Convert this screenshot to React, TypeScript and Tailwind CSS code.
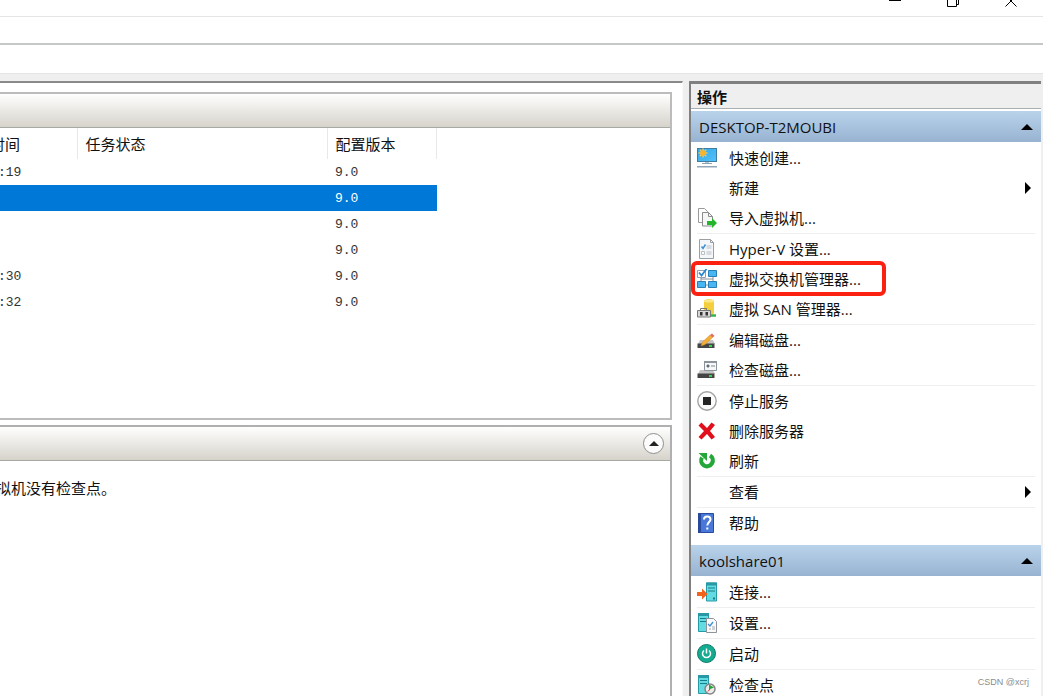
import type { ReactNode } from "react";

const ui = "font-['Open_Sans','Noto_Sans_CJK_SC',sans-serif]";

const QuickCreateIcon = () => (
  <svg viewBox="0 0 20 20" className="size-5">
    <defs>
      <linearGradient id="screen" x1="0" y1="0" x2="1" y2="1">
        <stop offset="0" stopColor="#2fa8e8" />
        <stop offset="1" stopColor="#55c1fa" />
      </linearGradient>
    </defs>
    <rect x="0.5" y="0.5" width="19" height="13" fill="url(#screen)" stroke="#3f7da0" />
    <path d="M8 14h4v1.5H8z" fill="#b5c3cd" />
    <path d="M5 15h10v1H5z" fill="#8fa3b2" />
    <path d="M0 18h20v1.5H0z" fill="#91a7b8" />
    <path d="M6 .5v9M1.5 5h9M2.800 1.800l6.400 6.400M9.200 1.800L2.800 8.200" stroke="#f0c860" strokeWidth="1.400" />
    <circle cx="6" cy="5" r="2.800" fill="#fbb32a" />
  </svg>
);

const ImportIcon = () => (
  <svg viewBox="0 0 20 20" className="size-5">
    <path d="M1.500.500h6l3 3v11h-9z" fill="#fff" stroke="#9a9a9a" />
    <path d="M5.500 4.500h6l4 4v9.500h-10z" fill="#f7f7f7" stroke="#8c8c8c" />
    <path d="M11.500 4.500v4h4" fill="none" stroke="#8c8c8c" />
    <path d="M10 13h5v-3l5 5-5 5v-3h-5z" fill="#25b52b" />
  </svg>
);

const ChecklistIcon = () => (
  <svg viewBox="0 0 20 20" className="size-5">
    <path d="M2.500.500h11l3 3v16h-14z" fill="#f4f7fa" stroke="#9b9fa3" />
    <path d="M13.500.500v3h3" fill="none" stroke="#9b9fa3" />
    <path d="M9.500 7h5M9.500 9h5M9.500 13h5M9.500 15h5" stroke="#b9bdc2" />
    <path d="M4.500 12.500h3v3h-3z" fill="#fff" stroke="#b9bdc2" />
    <path d="M4.500 7.500l1.500 2 2.500-4" fill="none" stroke="#3d8fd9" strokeWidth="1.500" />
  </svg>
);

const SwitchIcon = () => (
  <svg viewBox="0 0 20 20" className="size-5">
    <path d="M4 8v4M16 8v4M4 10h12M8 16h4" stroke="#8a8f94" />
    <path d="M11.500 1.500h8v6h-8zM.500 12.500h8v6h-8zM11.500 12.500h8v6h-8z" fill="#48b6f3" stroke="#2a7fb4" />
    <path d="M.500 1.500h8v7h-8z" fill="#fff" stroke="#8fa3b2" />
    <path d="M2 3.500l2.500 3L9.500 0" fill="none" stroke="#2b86cf" strokeWidth="1.800" />
  </svg>
);

const SanIcon = () => (
  <svg viewBox="0 0 20 20" className="size-5">
    <path d="M7 2c0-2.500 10-2.500 10 0v12c0 2.500-10 2.500-10 0z" fill="#f4cf3c" />
    <ellipse cx="12" cy="2" rx="5" ry="1.500" fill="#fbe88a" />
    <path d="M3.500 11V9.500h6V11" fill="none" stroke="#777" />
    <path d="M.500 11.500h13v6.500h-13z" fill="#d7d7d7" stroke="#777" />
    <path d="M3 13h2.500v3.500H3zM8.500 13H11v3.500H8.500z" fill="#333" />
    <path d="M14 16.500h5" stroke="#35b34a" strokeWidth="2.500" />
  </svg>
);

const DiskBody = () => (
  <>
    <path d="M3 10h13l2 4H1z" fill="#c4c4c4" />
    <path d="M.500 13.500h17V18H.500z" fill="#454545" />
    <path d="M12 15h3v2h-3z" fill="#36d548" />
  </>
);

const EditDiskIcon = () => (
  <svg viewBox="0 0 20 20" className="size-5">
    <DiskBody />
    <path d="M4 16l1.500-4L13 5l2.500 2.500L8 14.500z" fill="#f5ae35" stroke="#c98a2a" strokeWidth=".5" />
    <path d="M13 5l2-1.500L17.500 6l-2 1.500z" fill="#e36b62" />
  </svg>
);

const InspectDiskIcon = () => (
  <svg viewBox="0 0 20 20" className="size-5">
    <DiskBody />
    <path d="M7.500 1.500h12v9h-12z" fill="#f7f8fa" stroke="#8d949c" />
    <path d="M7 1h13v2H7z" fill="#8d949c" />
    <path d="M10 5h2v2h-2zM14 6h4" fill="#4d7fb0" stroke="#666" strokeWidth=".8" />
  </svg>
);

const StopIcon = () => (
  <svg viewBox="0 0 20 20" className="size-5">
    <circle cx="10" cy="10" r="9.200" fill="#fcfcfc" stroke="#a3a3a3" strokeWidth="1.400" />
    <path d="M6 6h8v8H6z" fill="#252525" />
  </svg>
);

const DeleteIcon = () => (
  <svg viewBox="0 0 20 20" className="size-5">
    <path d="M1.500 4.500l3-3L10 7l4.500-5.500 3.500 2.500-5 6 5 6-3.500 2.500L10 13l-5.500 5.500-3-2.500L7 10z" fill="#e10e1c" />
  </svg>
);

const RefreshIcon = () => (
  <svg viewBox="0 0 20 20" className="size-5">
    <path d="M13 4.500a5.800 5.800 0 1 1-8 2" fill="none" stroke="#23a738" strokeWidth="4.200" />
    <path d="M1.500 2H10v8z" fill="#23a738" />
  </svg>
);

const HelpIcon = () => (
  <svg viewBox="0 0 20 20" className="size-5">
    <path d="M1.500.500h15v19h-15z" fill="#4a78d8" stroke="#284b9d" />
    <path d="M1 0h3v20H1z" fill="#29499a" />
    <path d="M7 6.500c0-4 6.500-4 6.500 0 0 2.500-3.200 2.700-3.200 6" fill="none" stroke="#fff" strokeWidth="2" />
    <path d="M9.300 14.500h2v2h-2z" fill="#fff" />
  </svg>
);

const ServerShape = () => (
  <>
    <path d="M.500.500h10v18H.500z" fill="#63dbe2" stroke="#259ba5" />
    <path d="M0 0h11v3H0z" fill="#2699a4" />
    <path d="M2 5.500h7M2 8.500h7" stroke="#187d88" />
  </>
);

const ConnectIcon = () => (
  <svg viewBox="0 0 20 20" className="size-5">
    <g transform="translate(9 .5)">
      <ServerShape />
      <path d="M7 15h2v2H7z" fill="#187d88" />
    </g>
    <path d="M0 10h5V6.500l5.500 5.500L5 17.500V14H0z" fill="#f2641c" />
  </svg>
);

const SettingsIcon = () => (
  <svg viewBox="0 0 20 20" className="size-5">
    <g transform="translate(1 0)">
      <ServerShape />
    </g>
    <path d="M9.500 5.500h7l3 3v11h-10z" fill="#fafafa" stroke="#8f9499" />
    <path d="M11 11l2 2 3-4" fill="none" stroke="#3d8fd9" strokeWidth="1.300" />
    <path d="M12 16h2M15 14h3M15 16h3" stroke="#a5a9ae" />
  </svg>
);

const StartIcon = () => (
  <svg viewBox="0 0 20 20" className="size-5">
    <circle cx="9.500" cy="9.500" r="9" fill="#14ab91" stroke="#0d7a68" />
    <path d="M7 6.500a4 4 0 1 0 5 0M9.500 4.500v5" fill="none" stroke="#fff" strokeWidth="1.500" />
  </svg>
);

const CheckpointIcon = () => (
  <svg viewBox="0 0 20 20" className="size-5">
    <g transform="translate(1 0)">
      <ServerShape />
    </g>
    <circle cx="13" cy="14" r="5" fill="#ececec" stroke="#858585" strokeWidth="1.500" />
    <path d="M12 14.500V9.500l5 3z" fill="#2aa43a" />
    <path d="M13 14l-2 2.500" stroke="#c33" />
  </svg>
);

type Action = { label: string; icon?: ReactNode; submenu?: boolean };

const hostGroups: Action[][] = [
  [
    { label: "快速创建...", icon: <QuickCreateIcon /> },
    { label: "新建", submenu: true },
    { label: "导入虚拟机...", icon: <ImportIcon /> },
  ],
  [
    { label: "Hyper-V 设置...", icon: <ChecklistIcon /> },
    { label: "虚拟交换机管理器...", icon: <SwitchIcon /> },
    { label: "虚拟 SAN 管理器...", icon: <SanIcon /> },
  ],
  [
    { label: "编辑磁盘...", icon: <EditDiskIcon /> },
    { label: "检查磁盘...", icon: <InspectDiskIcon /> },
  ],
  [
    { label: "停止服务", icon: <StopIcon /> },
    { label: "删除服务器", icon: <DeleteIcon /> },
    { label: "刷新", icon: <RefreshIcon /> },
  ],
  [{ label: "查看", submenu: true }],
  [{ label: "帮助", icon: <HelpIcon /> }],
];

const vmGroups: Action[][] = [
  [{ label: "连接...", icon: <ConnectIcon /> }],
  [{ label: "设置...", icon: <SettingsIcon /> }],
  [{ label: "启动", icon: <StartIcon /> }],
  [{ label: "检查点", icon: <CheckpointIcon /> }],
];

const machines = [":19", "", "", "", ":30", ":32"];

const highlighted = "虚拟交换机管理器...";

const ActionSection = ({ title, groups }: { title: string; groups: Action[][] }) => (
  <section className="pb-[7px]">
    <button className="flex h-[31px] w-full items-center justify-between bg-linear-to-b from-[#b9d3eb] to-[#98b3d1] px-2">
      <span>{title}</span>
      <svg viewBox="0 0 12 6" className="h-[6px] w-3">
        <path d="M0 6l6-6 6 6z" />
      </svg>
    </button>
    {groups.map((group, index) => (
      <ul key={index} className="mx-[6px] border-b border-[#efefef] first-of-type:pt-px last:border-b-0">
        {group.map((action) => (
          <li key={action.label} className="relative">
            <button className="flex h-[30px] w-full items-center gap-3 text-left whitespace-nowrap">
              <span className="size-5 shrink-0">{action.icon}</span>
              <span className="flex-1">{action.label}</span>
              {action.submenu && (
                <svg viewBox="0 0 6 12" className="mr-1 h-3 w-[6px]">
                  <path d="M0 0l6 6-6 6z" />
                </svg>
              )}
            </button>
            {action.label === highlighted && (
              <span className="pointer-events-none absolute -top-[3px] -left-[6px] h-[35px] w-[195px] rounded-md border-4 border-[#fa2110]" />
            )}
          </li>
        ))}
      </ul>
    ))}
  </section>
);

const PanelHeader = ({ children }: { children?: ReactNode }) => (
  <div className="flex h-[34px] shrink-0 items-center justify-end border-b border-[#a8a8a4] bg-linear-to-b from-white to-[#d6d3cb] pr-[6px]">
    {children}
  </div>
);

const App = () => {
  return (
    <div className={`relative flex h-screen flex-col overflow-hidden bg-[#efefef] text-[15px] leading-5 text-[#111] ${ui}`}>
      <header>
        <div className="flex h-[17px] items-start justify-end gap-[46px] border-b border-[#e5e5e5] bg-white pr-[26px]">
          <button aria-label="最小化">
            <svg viewBox="0 0 12 8" className="h-2 w-3">
              <path d="M0 .5h12" stroke="#000" />
            </svg>
          </button>
          <button aria-label="还原">
            <svg viewBox="0 0 12 8" className="h-2 w-3">
              <path d="M.5-1v7.500h9V-1M9.500 4.500h2V-1" fill="none" stroke="#000" />
            </svg>
          </button>
          <button aria-label="关闭">
            <svg viewBox="0 0 12 8" className="h-2 w-3">
              <path d="M.5 6.500L6 1l5.500 5.500M5 0l1 1 1-1" fill="none" stroke="#000" />
            </svg>
          </button>
        </div>
        <div className="h-[28px] border-b-2 border-[#c6c8c8] bg-white" />
        <div className="h-[29px] border-b border-[#e5e5e5] bg-white" />
      </header>

      <div className="flex min-h-0 flex-1 gap-[6px] pt-[7px]">
        <main className="flex min-w-0 flex-1 flex-col gap-[5px] overflow-hidden border-t-2 border-r border-t-[#8a8a8a] border-r-[#fafafa] bg-white pt-[9px] pr-[10px]">
          <section className="flex h-[328px] shrink-0 flex-col border-t-2 border-r-2 border-b-2 border-[#bcbcbc]">
            <PanelHeader />
            <table className="-ml-[11px] w-[448px] table-fixed border-collapse">
              <thead>
                <tr className="h-[31px] text-left">
                  <th className="w-[88px] border-r border-[#e8e8e8] pl-px font-normal">时间</th>
                  <th className="w-[250px] border-r border-[#e8e8e8] pl-2 font-normal">任务状态</th>
                  <th className="border-r border-[#e8e8e8] pl-2 font-normal">配置版本</th>
                </tr>
              </thead>
              <tbody className="font-['Liberation_Mono','Noto_Sans_CJK_SC',monospace] text-[13px] text-[#333]">
                {machines.map((time, index) => (
                  <tr key={index} className={index === 1 ? "h-[26px] bg-[#0078d7] text-white" : "h-[26px]"}>
                    <td className="pt-[2px] pl-[9px]">{time}</td>
                    <td />
                    <td className="pt-[2px] pl-2">9.0</td>
                  </tr>
                ))}
              </tbody>
            </table>
          </section>
          <section className="flex min-h-0 flex-1 flex-col border-t-2 border-r-2 border-[#b0b0b0]">
            <PanelHeader>
              <button aria-label="折叠" className="flex size-[21px] items-center justify-center rounded-full border border-[#8f8f8f] bg-[#fbfbfb]">
                <svg viewBox="0 0 10 5" className="h-[5px] w-[10px]">
                  <path d="M0 5l5-5 5 5z" fill="#222" />
                </svg>
              </button>
            </PanelHeader>
            <p className="-ml-1 pt-[17px]">拟机没有检查点。</p>
          </section>
        </main>

        <aside className="mr-[2px] w-[352px] shrink-0 overflow-hidden border-t-[3px] border-l-2 border-[#808080] bg-white">
          <h2 className="mb-[2px] h-[25px] border-b border-[#a9aeb0] bg-[#efefef] pt-[3px] pl-[6px] font-bold">操作</h2>
          <ActionSection title="DESKTOP-T2MOUBI" groups={hostGroups} />
          <ActionSection title="koolshare01" groups={vmGroups} />
        </aside>
      </div>

      <span className="absolute right-[14px] bottom-[6px] font-['Liberation_Sans',sans-serif] text-[9px] leading-4 text-[#8c8c8c]">
        CSDN @xcrj
      </span>
    </div>
  );
};

export default App;
